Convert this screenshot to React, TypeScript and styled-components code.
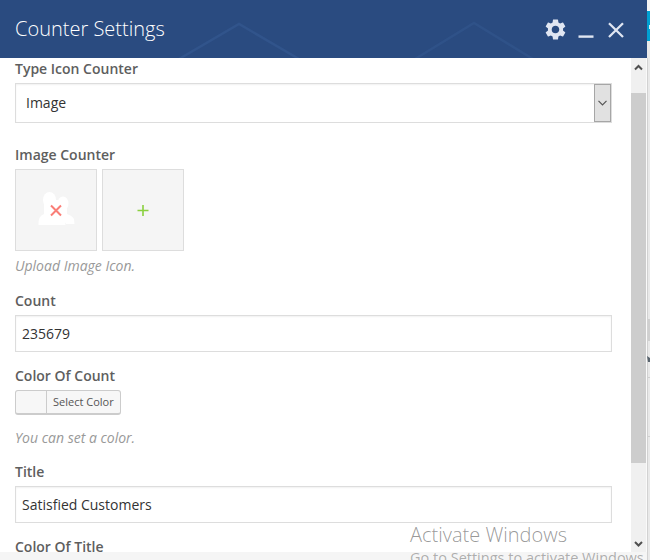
import React from 'react';
import styled, { createGlobalStyle } from 'styled-components';

const GlobalStyle = createGlobalStyle`
  *, *::before, *::after { box-sizing: border-box; }
  body { margin: 0; background: #e9e9e9; overflow: hidden; }
`;

const Screen = styled.div`
  position: relative;
  display: flex;
  width: 650px;
  height: 560px;
  overflow: hidden;
  font-family: 'Open Sans', 'Noto Sans', sans-serif;
  font-size: 14px;
  color: #333;
`;

const Dialog = styled.section`
  display: flex;
  flex-direction: column;
  width: 647px;
  height: 560px;
  background: #fff;
`;

const Header = styled.header`
  position: relative;
  display: flex;
  flex: none;
  align-items: center;
  justify-content: space-between;
  height: 58px;
  padding: 0 22px 0 15px;
  background: #2a4b80;
`;

const HeaderPattern = styled.svg`
  position: absolute;
  inset: 0;
`;

const Title = styled.h1`
  position: relative;
  margin: 0;
  font-size: 20px;
  font-weight: 300;
  line-height: 58px;
  color: #fff;
`;

const Controls = styled.div`
  position: relative;
  display: flex;
  align-items: center;
  height: 58px;
`;

const ControlIcon = styled.svg<{ $gap?: number }>`
  display: block;
  margin-left: ${(p) => p.$gap ?? 0}px;
`;

const Body = styled.div`
  display: flex;
  flex: none;
  height: 494px;
  overflow: hidden;
`;

const Form = styled.div`
  flex: 1;
  padding: 1px 19px 0 15px;
`;

const Footer = styled.footer`
  flex: 1;
  background: #f5f5f5;
`;

const Field = styled.div<{ $space: number }>`
  margin-bottom: ${(p) => p.$space}px;
`;

const Label = styled.div`
  height: 20px;
  margin-bottom: 4px;
  font-weight: 600;
  line-height: 20px;
  color: #5e5e5e;
`;

const Hint = styled.div<{ $top: number }>`
  height: 20px;
  margin-top: ${(p) => p.$top}px;
  font-style: italic;
  line-height: 20px;
  color: #999;
`;

const Select = styled.div`
  display: flex;
  justify-content: space-between;
  width: 597px;
  height: 40px;
  border: 1px solid #ddd;
  padding-left: 10px;
  line-height: 38px;
  box-shadow: inset 0 1px 2px rgba(0, 0, 0, 0.06);
`;

const SelectArrow = styled.div`
  display: flex;
  align-items: center;
  justify-content: center;
  width: 17px;
  height: 38px;
  border: 1px solid #a6a6a6;
  background: #e1e1e1;
`;

const TextBox = styled.div`
  width: 597px;
  height: 37px;
  border: 1px solid #ddd;
  padding-left: 6px;
  line-height: 36px;
  box-shadow: inset 0 1px 2px rgba(0, 0, 0, 0.06);
`;

const Tiles = styled.div`
  display: flex;
  gap: 5px;
`;

const Tile = styled.div`
  width: 82px;
  height: 82px;
  border: 1px solid #ddd;
  background: #f5f5f5;
`;

const ColorButton = styled.div`
  display: flex;
  width: 106px;
  height: 25px;
  overflow: hidden;
  border: 1px solid #ccc;
  border-bottom-width: 2px;
  border-radius: 3px;
  background: #f7f7f7;
`;

const ColorText = styled.span`
  flex: 1;
  margin-left: 30px;
  border-left: 1px solid #ccc;
  padding-left: 6px;
  font-size: 11px;
  line-height: 22px;
  white-space: nowrap;
  color: #555;
`;

const Scrollbar = styled.div`
  display: flex;
  flex-direction: column;
  width: 16px;
  border-right: 1px solid #fafafa;
  background: #f0f0f0;
`;

const ScrollArrow = styled.svg`
  display: block;
  flex: none;
`;

const ScrollThumb = styled.div`
  height: 370px;
  margin-top: 18px;
  margin-bottom: auto;
  background: #cdcdcd;
`;

const PageEdge = styled.svg`
  display: block;
  flex: none;
`;

const Watermark = styled.div`
  position: absolute;
  left: 410px;
  top: 523px;
  white-space: nowrap;
  color: rgba(120, 120, 120, 0.58);
`;

const WatermarkTitle = styled.div`
  font-size: 20px;
  font-weight: 300;
  line-height: 24px;
  color: rgba(100, 100, 100, 0.66);
`;

const WatermarkText = styled.div`
  font-size: 14.5px;
  line-height: 22px;
`;

export default function App() {
  return (
    <>
      <GlobalStyle />
      <Screen>
        <Dialog>
          <Header>
            <HeaderPattern width="647" height="58" fill="none" stroke="#31548b" strokeWidth="2.5">
              <path d="M179 59L239 24L299 59" />
              <path d="M415 59L474 23L533 59" strokeOpacity=".75" />
            </HeaderPattern>
            <Title>Counter Settings</Title>
            <Controls>
              <ControlIcon width="21" height="21" viewBox="2 2 20 20" fill="#e0e6f2">
                <path d="M19.140 12.940c.04-.3.06-.61.06-.94 0-.32-.02-.64-.07-.94l2.030-1.580a.49.49 0 0 0 .12-.61l-1.920-3.320a.488.488 0 0 0-.59-.22l-2.390.96c-.5-.38-1.030-.7-1.620-.94l-.36-2.540a.484.484 0 0 0-.48-.41h-3.840c-.24 0-.43.17-.47.41l-.36 2.540c-.59.24-1.130.57-1.620.94l-2.390-.96c-.22-.08-.47 0-.59.22L2.740 8.870c-.12.21-.08.47.12.61l2.030 1.580c-.05.3-.09.63-.09.94s.02.64.07.94l-2.030 1.580a.49.49 0 0 0-.12.61l1.920 3.320c.12.22.37.29.59.22l2.390-.96c.5.38 1.030.7 1.620.94l.36 2.540c.05.24.24.41.48.41h3.840c.24 0 .44-.17.47-.41l.36-2.540c.59-.24 1.130-.56 1.620-.94l2.390.96c.22.08.47 0 .59-.22l1.920-3.320a.49.49 0 0 0-.12-.61l-2.010-1.580zM12 15.600A3.610 3.610 0 0 1 8.400 12c0-1.980 1.620-3.600 3.600-3.600s3.600 1.620 3.600 3.600-1.620 3.600-3.600 3.600z" />
              </ControlIcon>
              <ControlIcon $gap={12} width="16" height="20" fill="#e0e6f2">
                <path d="M.5 16.400h15v2.400h-15z" />
              </ControlIcon>
              <ControlIcon $gap={14} width="17" height="20" fill="none" stroke="#e0e6f2" strokeWidth="2.300">
                <path d="M1 4.300L15 18M15 4.300L1 18" />
              </ControlIcon>
            </Controls>
          </Header>

          <Body>
            <Form>
              <Field $space={22}>
                <Label>Type Icon Counter</Label>
                <Select>
                  <span>Image</span>
                  <SelectArrow>
                    <svg width="9" height="6" fill="none" stroke="#555" strokeWidth="1.200">
                      <path d="M0.500 .8L4.500 4.800L8.500 .8" />
                    </svg>
                  </SelectArrow>
                </Select>
              </Field>

              <Field $space={15}>
                <Label>Image Counter</Label>
                <Tiles>
                  <Tile>
                    <svg width="80" height="80">
                      <g fill="#fff">
                        <ellipse cx="47" cy="33.500" rx="5.500" ry="7" />
                        <path d="M42 39H51V44Q59 46 58.500 54H50z" />
                        <ellipse cx="33.500" cy="30" rx="6.500" ry="8" />
                        <path d="M28 30H42V43Q49 45 49.500 55H22.500Q22 46 28 44z" />
                      </g>
                      <path d="M35 35.500L45 45.500M45 35.500L35 45.500" stroke="#fa7e77" strokeWidth="2" />
                    </svg>
                  </Tile>
                  <Tile>
                    <svg width="80" height="80" stroke="#8ad03f" strokeWidth="1.600">
                      <path d="M34.500 40.500H45.500M40 35V46" />
                    </svg>
                  </Tile>
                </Tiles>
                <Hint $top={5}>Upload Image Icon.</Hint>
              </Field>

              <Field $space={14}>
                <Label>Count</Label>
                <TextBox>235679</TextBox>
              </Field>

              <Field $space={14}>
                <Label>Color Of Count</Label>
                <ColorButton>
                  <ColorText>Select Color</ColorText>
                </ColorButton>
                <Hint $top={13}>You can set a color.</Hint>
              </Field>

              <Field $space={14}>
                <Label>Title</Label>
                <TextBox>Satisfied Customers</TextBox>
              </Field>

              <Label>Color Of Title</Label>
            </Form>

            <Scrollbar>
              <ScrollArrow width="15" height="17" fill="none" stroke="#505050" strokeWidth="2">
                <path d="M4 11.500L7.500 8L11 11.500" />
              </ScrollArrow>
              <ScrollThumb />
              <ScrollArrow width="15" height="17" fill="none" stroke="#505050" strokeWidth="2">
                <path d="M4 7L7.500 10.500L11 7" />
              </ScrollArrow>
            </Scrollbar>
          </Body>
          <Footer />
        </Dialog>

        <PageEdge width="3" height="560">
          <path d="M0 0H3V11H0z" fill="#f4f4f4" />
          <path d="M0 11H3V41H0z" fill="#00a0d2" />
          <path d="M2 25h1v4h-1z" fill="#d8f0f8" />
          <path d="M0 58H1V560H0z" fill="#d2d2d2" />
          <path d="M1 319H3V341H1zM1 377h2v1h-2zM1 436h2v1h-2z" fill="#d0d0d0" />
          <path d="M0 356L3 358V362H1z" fill="#59646e" />
        </PageEdge>

        <Watermark>
          <WatermarkTitle>Activate Windows</WatermarkTitle>
          <WatermarkText>Go to Settings to activate Windows.</WatermarkText>
        </Watermark>
      </Screen>
    </>
  );
}
